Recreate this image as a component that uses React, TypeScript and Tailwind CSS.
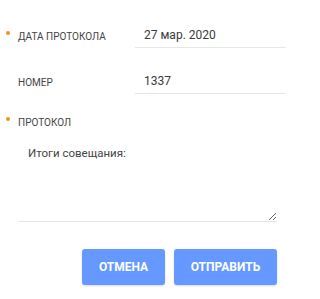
import React from "react";

function Label({ text, required }: { text: string; required?: boolean }) {
  return (
    <div className="relative flex items-start w-[135px] shrink-0 pl-[18px] pt-[6px] text-[10px] leading-[14px] uppercase text-[#444]">
      {required && (
        <span className="absolute left-[6px] top-[7px] w-[4px] h-[4px] rounded-full bg-[#f0961e]" />
      )}
      {text}
    </div>
  );
}

export default function App() {
  return (
    <div
      className="w-[294px] h-[299px] bg-white pt-[24px]"
      style={{ fontFamily: "Roboto, 'Liberation Sans', sans-serif" }}
    >
      <div className="flex h-[24px] pr-[8px]">
        <Label text="Дата протокола" required />
        <div className="flex-1 flex items-center pl-[9px] pb-[1px] text-[12px] text-[#3a3a3a] border-b border-[#e6e6e6]">
          27 мар. 2020
        </div>
      </div>
      <div className="flex h-[24px] mt-[22px] pr-[8px]">
        <Label text="Номер" />
        <div className="flex-1 flex items-center pl-[9px] pb-[1px] text-[12px] text-[#3a3a3a] border-b border-[#e6e6e6]">
          1337
        </div>
      </div>
      <div className="flex h-[24px] mt-[16px]">
        <Label text="Протокол" required />
      </div>
      <div className="pl-[18px] pr-[17px] mt-[2px]">
        <textarea
          defaultValue="Итоги совещания:"
          className="block w-full h-[86px] px-[10px] py-[9px] text-[11.5px] leading-[16px] text-[#444] border-b border-[#e6e6e6] outline-none resize-y"
          style={{ fontFamily: "Roboto, 'Liberation Sans', sans-serif" }}
        />
      </div>
      <div className="flex justify-end gap-[9px] pr-[17px] mt-[27px]">
        <button className="w-[83px] h-[36px] rounded-[3px] bg-[#6699ff] text-white text-[12px] font-bold uppercase shadow-[0_1px_2px_rgba(0,0,0,0.15)]">
          Отмена
        </button>
        <button className="w-[103px] h-[36px] rounded-[3px] bg-[#6699ff] text-white text-[12px] font-bold uppercase shadow-[0_1px_2px_rgba(0,0,0,0.15)]">
          Отправить
        </button>
      </div>
    </div>
  );
}
